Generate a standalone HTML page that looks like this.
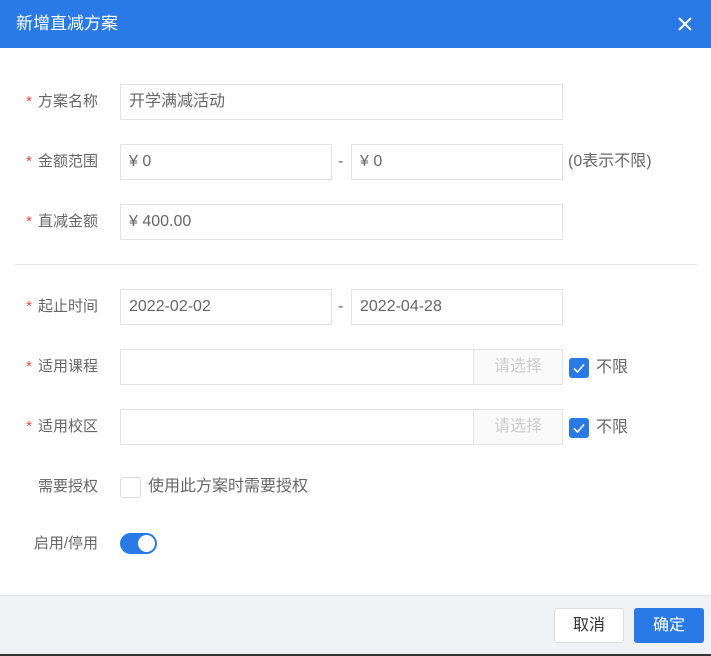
<!DOCTYPE html>
<html><head><meta charset="utf-8"><style>
*{margin:0;padding:0;box-sizing:border-box}
body{width:711px;height:656px;background:#fff;font-family:"Liberation Sans","Noto Sans CJK SC",sans-serif;position:relative;overflow:hidden;color:#666}
.a{position:absolute}
.hd{left:0;top:0;width:711px;height:48px;background:#2979e6;color:#fff;font-size:17px;line-height:48px;padding-left:16px}
.lb{font-size:15px;color:#666;width:98px;text-align:right;line-height:36px;height:36px}
.lb i{color:#f04a3a;font-style:normal;margin-right:6px}
.in{height:36px;border:1px solid #e3e3e3;font-size:16px;line-height:34px;padding-left:8px;color:#666}
.btn{left:473px;width:90px;height:36px;background:#fafafa;border:1px solid #e3e3e3;color:#ccc;font-size:16px;text-align:center;line-height:34px}
.cb{width:20px;height:20px;background:#2979e6;border-radius:3px}
.t{font-size:16px;line-height:20px}
</style></head><body>
<div class="a hd">新增直减方案</div>
<svg class="a" style="left:678px;top:17px" width="14" height="14" viewBox="0 0 14 14"><path d="M1 1L13 13M13 1L1 13" stroke="#fff" stroke-width="2"/></svg>

<div class="a lb" style="left:0;top:84px"><i>*</i>方案名称</div>
<div class="a in" style="left:120px;top:84px;width:443px">开学满减活动</div>

<div class="a lb" style="left:0;top:144px"><i>*</i>金额范围</div>
<div class="a in" style="left:120px;top:144px;width:212px">¥ 0</div>
<div class="a t" style="left:338px;top:152px">-</div>
<div class="a in" style="left:351px;top:144px;width:212px">¥ 0</div>
<div class="a t" style="left:568px;top:152px">(0表示不限)</div>

<div class="a lb" style="left:0;top:204px"><i>*</i>直减金额</div>
<div class="a in" style="left:120px;top:204px;width:443px">¥ 400.00</div>

<div class="a" style="left:15px;top:264px;width:682px;height:1px;background:#e5e5e5"></div>

<div class="a lb" style="left:0;top:289px"><i>*</i>起止时间</div>
<div class="a in" style="left:120px;top:289px;width:212px">2022-02-02</div>
<div class="a t" style="left:338px;top:297px">-</div>
<div class="a in" style="left:351px;top:289px;width:212px">2022-04-28</div>

<div class="a lb" style="left:0;top:349px"><i>*</i>适用课程</div>
<div class="a in" style="left:120px;top:349px;width:443px"></div>
<div class="a btn" style="top:349px">请选择</div>
<div class="a cb" style="left:569px;top:358px"><svg width="20" height="20"><path d="M5 10.5l3.5 3.5L15 6.5" stroke="#fff" stroke-width="1.6" fill="none"/></svg></div>
<div class="a t" style="left:596px;top:358px">不限</div>

<div class="a lb" style="left:0;top:409px"><i>*</i>适用校区</div>
<div class="a in" style="left:120px;top:409px;width:443px"></div>
<div class="a btn" style="top:409px">请选择</div>
<div class="a cb" style="left:569px;top:418px"><svg width="20" height="20"><path d="M5 10.5l3.5 3.5L15 6.5" stroke="#fff" stroke-width="1.6" fill="none"/></svg></div>
<div class="a t" style="left:596px;top:418px">不限</div>

<div class="a lb" style="left:0;top:469px">需要授权</div>
<div class="a" style="left:120px;top:477px;width:21px;height:21px;border:1px solid #ddd;border-radius:3px"></div>
<div class="a t" style="left:148px;top:477px">使用此方案时需要授权</div>

<div class="a lb" style="left:0;top:526px">启用/停用</div>
<div class="a" style="left:120px;top:533px;width:37px;height:21px;background:#2979e6;border-radius:11px"><div style="position:absolute;right:2px;top:2px;width:17px;height:17px;border-radius:50%;background:#fff"></div></div>

<div class="a" style="left:0;top:595px;width:711px;height:59px;background:#f0f2f5;border-top:1px solid #e3e3e3"></div>
<div class="a" style="left:554px;top:608px;width:70px;height:35px;background:#fff;border:1px solid #ddd;border-radius:3px;color:#333;font-size:16px;text-align:center;line-height:33px">取消</div>
<div class="a" style="left:634px;top:608px;width:70px;height:35px;background:#2979e6;border-radius:3px;color:#fff;font-size:16px;text-align:center;line-height:35px">确定</div>
<div class="a" style="left:0;top:654px;width:711px;height:2px;background:#333"></div>
</body></html>
